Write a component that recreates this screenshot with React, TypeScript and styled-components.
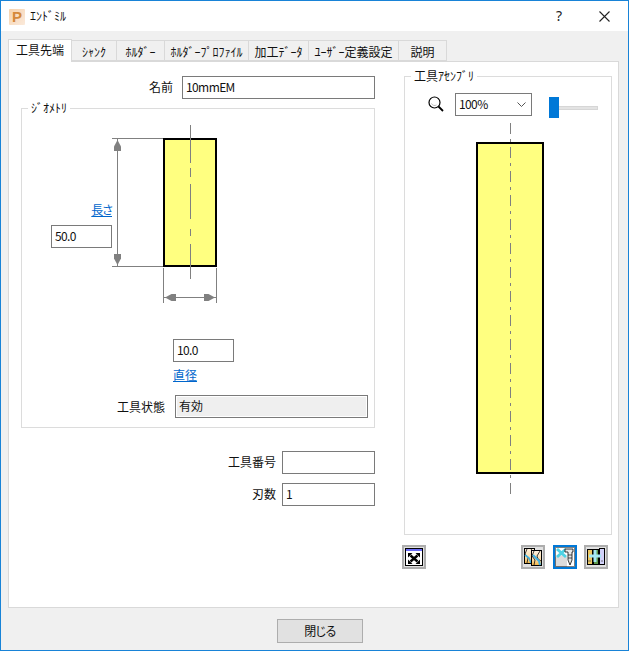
import React from "react";
import styled, { createGlobalStyle } from "styled-components";

const Global = createGlobalStyle`
  html, body { margin: 0; padding: 0; background: #f0f0f0; }
  body { font-family: "Noto Sans CJK JP", "Noto Sans", sans-serif; font-size: 12px; color: #111; }
  * { box-sizing: border-box; }
`;

const Window = styled.div`
  width: 629px; height: 651px; border: 1px solid #1883d7; background: #f0f0f0;
  display: flex; flex-direction: column; overflow: hidden;
`;
const TitleBar = styled.div`
  height: 30px; background: #fff; display: flex; align-items: center; padding-left: 8px; flex: none;
`;
const Logo = styled.div`
  width: 16px; height: 16px; border-radius: 1px; margin-top: 1px;
  background: linear-gradient(135deg, #f6d2ad, #fbeadb);
  color: #d5893a; font: bold 15px/16px "Liberation Sans", sans-serif; text-align: center;
`;
const TitleText = styled.div`
  margin-left: 5px; line-height: 16px; margin-top: -1px;
`;
const TitleButtons = styled.div`
  margin-left: auto; display: flex; align-items: center; padding-right: 18px;
`;
const Help = styled.div`
  font: 14px/16px "Noto Sans", sans-serif; width: 12px; text-align: center; margin-right: 34px; color: #222; margin-top: -1px;
`;

const Body = styled.div`
  flex: 1; display: flex; flex-direction: column; padding: 8px 0 0 7px;
`;
const TabStrip = styled.div`
  display: flex; height: 22px; align-items: flex-end; position: relative; z-index: 1; flex: none;
`;
const Tab = styled.div<{ $w: number; $active?: boolean }>`
  width: ${p => p.$w}px;
  height: ${p => (p.$active ? 23 : 21)}px;
  margin-bottom: ${p => (p.$active ? -1 : 0)}px;
  background: ${p => (p.$active ? "#fff" : "#f0f0f0")};
  border: 1px solid #d9d9d9;
  border-left-width: ${p => (p.$active ? 1 : 0)}px;
  border-bottom-width: ${p => (p.$active ? 0 : 1)}px;
  display: flex; align-items: center; justify-content: center;
  white-space: nowrap; line-height: 16px;
  padding: ${p => (p.$active ? "0 0 2px" : "2px 0 0")};
`;
const Panel = styled.div`
  width: 611px; height: 547px; background: #fff; border: 1px solid #d9d9d9;
  padding: 14px 0 0 12px; display: flex; gap: 29px; flex: none;
`;
const LeftCol = styled.div`
  width: 354px; display: flex; flex-direction: column; flex: none;
`;
const RightCol = styled.div`
  width: 208px; display: flex; flex-direction: column; flex: none;
`;
const FormRow = styled.div<{ $label: number; $gap: number }>`
  display: grid; grid-template-columns: ${p => p.$label}px 1fr; column-gap: ${p => p.$gap}px; align-items: center;
`;
const Label = styled.label`
  text-align: right; line-height: 16px; white-space: nowrap; padding-bottom: 2px;
`;
const Field = styled.input<{ $w?: number }>`
  width: ${p => (p.$w ? `${p.$w}px` : "100%")}; height: 23px; border: 1px solid #7a7a7a; background: #fff;
  padding: 0 3px 2px; font: inherit; letter-spacing: -0.6px; color: #111; outline: none; display: block;
`;
const Group = styled.div`
  position: relative; border: 1px solid #dcdcdc;
`;
const Legend = styled.div`
  position: absolute; top: -9px; left: 6px; background: #fff; padding: 0 3px; line-height: 16px; white-space: nowrap;
`;
const Geometry = styled(Group)`
  height: 320px; margin-top: 9px; flex: none;
`;
const DrawingRow = styled.div`
  display: flex; padding: 11px 0 0 29px; height: 201px;
`;
const LengthCol = styled.div`
  width: 61px; flex: none; display: flex; flex-direction: column; align-items: flex-end; padding-top: 82px; gap: 7px;
`;
const DimLink = styled.a<{ $kana?: boolean }>`
  color: #0066cc; text-decoration: underline; line-height: 16px; cursor: pointer;
  font-feature-settings: ${p => (p.$kana ? '"palt"' : "normal")};
  letter-spacing: ${p => (p.$kana ? "-1px" : "0")};
`;
const DiameterCol = styled.div`
  margin: 29px 0 0 151px; display: flex; flex-direction: column; align-items: flex-start; gap: 5px;
`;
const StatusRow = styled.div`
  display: flex; align-items: center; margin-top: 12px; padding-left: 95px;
`;
const StatusLabel = styled(Label)`
  width: 48px; margin-right: 10px; flex: none; padding-bottom: 0;
`;
const StatusBox = styled.div`
  width: 193px; height: 23px; border: 1px solid #7a7a7a; background: #efefef; padding: 0 3px; line-height: 20px;
  box-shadow: inset 0 0 0 1px #fff;
`;
const NumberBlock = styled.div`
  margin-top: 23px; display: flex; flex-direction: column; gap: 9px;
`;
const Assembly = styled(Group)`
  height: 459px; flex: none;
`;
const ZoomRow = styled.div`
  display: flex; align-items: flex-start; padding: 16px 0 0 23px; height: 43px;
`;
const Glass = styled.svg`
  width: 16px; height: 16px; margin: 3px 11px 0 0; flex: none;
`;
const ZoomSelect = styled.div`
  width: 77px; height: 23px; border: 1px solid #7a7a7a; background: #fff; padding: 0 5px 2px 3px;
  display: flex; align-items: center; justify-content: space-between; flex: none; letter-spacing: -0.6px;
`;
const Slider = styled.div`
  display: flex; align-items: center; margin: 4px 0 0 17px;
`;
const Thumb = styled.div`
  width: 10px; height: 21px; background: #0078d7;
`;
const Track = styled.div`
  width: 39px; height: 4px; background: #e3e3e3; border: 1px solid #d6d6d6; border-left: 0;
`;
const ToolCanvas = styled.svg`
  display: block; width: 206px; height: 375px;
`;
const GeometrySvg = styled.svg`
  display: block; flex: none; width: 113px; height: 190px;
`;
const Chevron = styled.svg`
  width: 9px; height: 5px; margin-top: 2px; flex: none;
`;
const Toolbar = styled.div`
  display: flex; margin: 10px 0 0 -2px; width: 206px;
`;
const IconBtn = styled.div<{ $selected?: boolean; $ml?: number }>`
  width: 24px; height: 24px; flex: none; border: 2px solid ${p => (p.$selected ? "#0078d7" : "#adadad")};
  background: #e1e1e1; margin-left: ${p => p.$ml ?? 0}px;
  svg { display: block; width: 20px; height: 20px; }
`;
const Footer = styled.div`
  padding: 11px 0 0 269px;
`;
const CloseButton = styled.button`
  width: 86px; height: 24px; background: #e1e1e1; border: 1px solid #adadad; font: inherit; color: #111;
  padding: 0 0 2px; display: block; font-feature-settings: "palt"; letter-spacing: -0.5px;
`;

const ARROW = "#808080";
const GeometryDrawing = () => (
  <GeometrySvg viewBox="112 120 113 190">
    <rect x="164" y="139" width="52" height="127" fill="#ffff80" stroke="#000" strokeWidth="2" />
    <g stroke={ARROW} fill="none" shapeRendering="crispEdges">
      <path d="M190.5 125V163M190.5 168V177M190.5 184V219M190.5 229V236M190.5 244V279" />
      <path d="M112 138.5H163M112 266.5H163M117.5 139V266" />
      <path d="M163.5 268V303M216.5 268V303M163 297.5H216" />
    </g>
    <g fill={ARROW}>
      <path d="M117.5 140L121 146.5V151H114V146.5Z" />
      <path d="M117.5 265L121 258.5V254H114V258.5Z" />
      <path d="M165 297.5L171.5 294H176V301H171.5Z" />
      <path d="M215 297.5L208.5 294H204V301H208.5Z" />
    </g>
  </GeometrySvg>
);

const toolDashes: React.ReactNode[] = [];
for (let y = 123; y < 491; y += 24) {
  toolDashes.push(<path key={y} d={`M105.5 ${y - 120}v11M105.5 ${y - 120 + 16}v3`} />);
}

const App = () => (
  <Window>
    <Global />
    <TitleBar>
      <Logo>P</Logo>
      <TitleText>ｴﾝﾄﾞﾐﾙ</TitleText>
      <TitleButtons>
        <Help>?</Help>
        <svg width="11" height="11" viewBox="0 0 11 11"><path d="M.5.5l10 10M10.5.5l-10 10" stroke="#222" strokeWidth="1.1" fill="none" /></svg>
      </TitleButtons>
    </TitleBar>
    <Body>
      <TabStrip>
        <Tab $w={64} $active>工具先端</Tab>
        <Tab $w={45}>ｼｬﾝｸ</Tab>
        <Tab $w={48}>ﾎﾙﾀﾞｰ</Tab>
        <Tab $w={84}>ﾎﾙﾀﾞｰﾌﾟﾛﾌｧｲﾙ</Tab>
        <Tab $w={60}>加工ﾃﾞｰﾀ</Tab>
        <Tab $w={90}>ﾕｰｻﾞｰ定義設定</Tab>
        <Tab $w={48}>説明</Tab>
      </TabStrip>
      <Panel>
        <LeftCol>
          <FormRow $label={152} $gap={9}>
            <Label>名前</Label>
            <Field readOnly value="10mmEM" />
          </FormRow>
          <Geometry>
            <Legend>ｼﾞｵﾒﾄﾘ</Legend>
            <DrawingRow>
              <LengthCol>
                <DimLink $kana>長さ</DimLink>
                <Field $w={61} readOnly value="50.0" />
              </LengthCol>
              <GeometryDrawing />
            </DrawingRow>
            <DiameterCol>
              <Field $w={61} readOnly value="10.0" />
              <DimLink>直径</DimLink>
            </DiameterCol>
            <StatusRow>
              <StatusLabel>工具状態</StatusLabel>
              <StatusBox>有効</StatusBox>
            </StatusRow>
          </Geometry>
          <NumberBlock>
            <FormRow $label={255} $gap={6}>
              <Label>工具番号</Label>
              <Field readOnly value="" />
            </FormRow>
            <FormRow $label={255} $gap={6}>
              <Label>刃数</Label>
              <Field readOnly value="1" />
            </FormRow>
          </NumberBlock>
        </LeftCol>
        <RightCol>
          <Assembly>
            <Legend>工具ｱｾﾝﾌﾞﾘ</Legend>
            <ZoomRow>
              <Glass viewBox="0 0 16 16">
                <circle cx="6.5" cy="6.5" r="5.5" fill="#fff" stroke="#000" strokeWidth="1.2" />
                <path d="M3.5 7.5a3.5 3.5 0 0 0 5 1.5" stroke="#bbb" fill="none" />
                <path d="M10.5 10.5L15 15" stroke="#000" strokeWidth="1.8" />
              </Glass>
              <ZoomSelect>
                <span>100%</span>
                <Chevron viewBox="0 0 9 5"><path d="M.5.5l4 4 4-4" stroke="#555" fill="none" /></Chevron>
              </ZoomSelect>
              <Slider><Thumb /><Track /></Slider>
            </ZoomRow>
            <ToolCanvas viewBox="0 0 206 375">
              <rect x="72" y="23" width="66" height="330" fill="#ffff80" stroke="#000" strokeWidth="2" />
              <g stroke={ARROW} fill="none" shapeRendering="crispEdges">{toolDashes}</g>
            </ToolCanvas>
          </Assembly>
          <Toolbar>
            <IconBtn>
              <svg viewBox="0 0 20 20">
                <rect x="1.5" y="1.5" width="17" height="17" fill="#fff" stroke="#000" />
                <rect x="2" y="2" width="16" height="2" fill="#6a6af5" />
                <path d="M6.5 8.5l7 6M13.5 8.5l-7 6" stroke="#000" strokeWidth="2.4" />
                <path d="M4 6h4.5L4 10.5ZM16 6h-4.5L16 10.5ZM4 17h4.5L4 12.5ZM16 17h-4.5L16 12.5Z" fill="#000" />
              </svg>
            </IconBtn>
            <IconBtn $ml={95}>
              <svg viewBox="0 0 20 20">
                <defs>
                  <linearGradient id="sheet" x1="0" y1="0" x2="0" y2="1">
                    <stop offset="0" stopColor="#fff3e0" />
                    <stop offset=".6" stopColor="#fbdca8" />
                    <stop offset="1" stopColor="#f2b440" />
                  </linearGradient>
                </defs>
                <rect x="1.5" y="1.5" width="10" height="15" fill="url(#sheet)" stroke="#000" />
                <path d="M4 2L2 7l3 4-1 5M8 2l3 4" stroke="#222" fill="none" strokeWidth=".9" />
                <path d="M2 8l4 3 2 5" stroke="#40b0e0" fill="none" strokeWidth="1.6" />
                <rect x="8.5" y="3.5" width="10" height="15" fill="url(#sheet)" stroke="#000" />
                <path d="M11 4L9 9l3 4-1 5M17 4l-3 5 1 3 3 2" stroke="#222" fill="none" strokeWidth=".9" />
                <path d="M10 8l4 4 2 2 1 4" stroke="#40b0e0" fill="none" strokeWidth="2" />
              </svg>
            </IconBtn>
            <IconBtn $selected $ml={8}>
              <svg viewBox="0 0 20 20">
                <rect width="20" height="20" fill="#fff" />
                <path d="M0 10l8-2 4 2v10H0Z" fill="#dcdcdc" />
                <rect x=".5" y=".5" width="19" height="19" fill="none" stroke="#000" strokeDasharray="1 1" />
                <path d="M2 2l9 8M11 2L2 10" stroke="#4fd2e4" strokeWidth="3" />
                <path d="M10 2h8v3h-1v8l-2 5-2-5V5h-3Z" fill="#e6e6e6" stroke="#222" strokeWidth=".9" />
                <path d="M13 8h4M13 11h4" stroke="#222" strokeWidth=".8" />
              </svg>
            </IconBtn>
            <IconBtn $ml={7}>
              <svg viewBox="0 0 20 20">
                <rect x="1.5" y="2.5" width="5" height="15" fill="#eec860" stroke="#000" />
                <rect x="7.5" y="2.5" width="5" height="15" fill="#5f9a4c" stroke="#000" />
                <rect x="13.5" y="1.5" width="5" height="16" fill="#d2d2fa" stroke="#000" />
                <path d="M9 3v12M3 9h12" stroke="#a4e8f2" strokeWidth="3" />
                <path d="M2 14h3M15 14h2" stroke="#555" strokeWidth=".8" />
              </svg>
            </IconBtn>
          </Toolbar>
        </RightCol>
      </Panel>
      <Footer>
        <CloseButton>閉じる</CloseButton>
      </Footer>
    </Body>
  </Window>
);

export default App;
